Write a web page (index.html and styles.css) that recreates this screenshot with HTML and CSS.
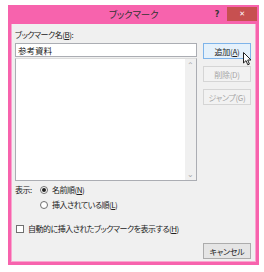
FILE: index.html
```html
<!DOCTYPE html>
<html lang="ja">
<head>
  <meta charset="UTF-8">
  <title>ブックマーク</title>
  <link rel="stylesheet" href="styles.css">
</head>
<body>
  <div class="window">
    <div class="titlebar">
      <span></span>
      <span class="title">ブックマーク</span>
      <div class="controls">
        <span class="help">?</span>
        <span class="close">✕</span>
      </div>
    </div>
    <div class="client">
      <div class="label">ブックマーク名(<u>B</u>):</div>
      <div class="main">
        <div class="combo">
          <div class="combo-input">参考資料</div>
          <div class="combo-list">
            <div class="list-body"></div>
            <div class="scrollbar">
              <span class="arrow">⌃</span>
              <span class="arrow">⌄</span>
            </div>
          </div>
        </div>
        <div class="buttons">
          <button class="btn btn-default">追加(<u>A</u>)</button>
          <button class="btn" disabled>削除(D)</button>
          <button class="btn" disabled>ジャンプ(G)</button>
          <svg class="cursor" width="9" height="14" viewBox="0 0 9 14">
            <path d="M0.5 0.5 L0.5 11 L3 8.6 L4.8 12.8 L6.4 12.1 L4.7 8 L8 8 Z" fill="#fff" stroke="#222" stroke-width="1"/>
          </svg>
        </div>
      </div>
      <div class="sort">
        <span class="sort-label">表示:</span>
        <div class="radios">
          <div class="radio-row"><span class="radio checked"></span>名前順(<u>N</u>)</div>
          <div class="radio-row"><span class="radio"></span>挿入されている順(<u>L</u>)</div>
        </div>
      </div>
      <div class="check-row"><span class="checkbox"></span>自動的に挿入されたブックマークを表示する(<u>H</u>)</div>
      <div class="footer">
        <button class="btn btn-cancel">キャンセル</button>
      </div>
    </div>
  </div>
</body>
</html>
```

FILE: styles.css
```css
body {
  margin: 0;
  background: #ffffff;
  font-family: "Noto Sans CJK JP", sans-serif;
  font-feature-settings: "palt";
  font-size: 8px;
  letter-spacing: -0.5px;
  color: #222222;
}

.window {
  margin: 5px 0 0 8px;
  width: 251px;
  height: 260px;
  box-sizing: border-box;
  background: #f763ad;
  padding: 0 3px 3px 3px;
  display: flex;
  flex-direction: column;
}

.titlebar {
  height: 19px;
  display: grid;
  grid-template-columns: 1fr auto 1fr;
  align-items: center;
}

.title {
  font-size: 9.5px;
  letter-spacing: -0.2px;
  color: #333333;
  line-height: 19px;
}

.controls {
  justify-self: end;
  display: flex;
  align-items: flex-start;
  height: 19px;
  margin-right: -1px;
}

.help {
  font-family: "DejaVu Sans", sans-serif;
  font-weight: bold;
  font-size: 8px;
  color: #333333;
  line-height: 19px;
  margin-right: 8px;
}

.close {
  margin-top: 2px;
  width: 30px;
  height: 14px;
  background: #c75050;
  color: #ffffff;
  font-family: "DejaVu Sans", sans-serif;
  font-weight: bold;
  font-size: 7px;
  line-height: 14px;
  text-align: center;
}

.client {
  flex: 1;
  background: #f0f0f0;
  border: 1px solid #f9a6cf;
  border-top: 0;
  padding: 5px 4px 0 3px;
  display: flex;
  flex-direction: column;
}

u {
  text-decoration: underline;
  text-underline-offset: 1px;
}

.label {
  height: 12px;
  line-height: 12px;
  margin-bottom: 2px;
}

.main {
  display: flex;
  gap: 6px;
}

.combo {
  width: 182px;
}

.combo-input {
  height: 14px;
  box-sizing: border-box;
  border: 1px solid #abadb3;
  background: #ffffff;
  padding-left: 2px;
  line-height: 12px;
  font-size: 8.5px;
  letter-spacing: 0;
}

.combo-list {
  height: 123px;
  box-sizing: border-box;
  border: 1px solid #abadb3;
  margin-top: 1px;
  border-top: 1px solid #dcdcdc;
  background: #ffffff;
  display: flex;
}

.list-body {
  flex: 1;
}

.scrollbar {
  width: 11px;
  background: #f0f0f0;
  display: flex;
  flex-direction: column;
  justify-content: space-between;
  align-items: center;
  color: #a8a8a8;
  font-size: 8px;
  line-height: 12px;
}

.buttons {
  position: relative;
  display: flex;
  flex-direction: column;
  gap: 7px;
}

.btn {
  width: 48px;
  height: 16px;
  padding: 0;
  font-family: inherit;
  font-feature-settings: "palt";
  font-size: 8px;
  letter-spacing: -0.3px;
  color: #222222;
  background: #e5e5e5;
  border: 1px solid #acacac;
}

.btn-default {
  background: #e5f1fb;
  border-color: #7eb4ea;
}

.btn:disabled {
  background: #f2f2f2;
  border-color: #d5d5d5;
  color: #a6a6a6;
}

.cursor {
  position: absolute;
  left: 40px;
  top: 9px;
}

.sort {
  display: flex;
  margin-top: 2px;
}

.sort-label {
  width: 25px;
  line-height: 13px;
}

.radio-row {
  display: flex;
  align-items: center;
  height: 13px;
  margin-bottom: 2px;
}

.radio {
  width: 8px;
  height: 8px;
  box-sizing: border-box;
  border: 1px solid #707070;
  border-radius: 50%;
  background: #ffffff;
  margin-right: 4px;
  display: flex;
  align-items: center;
  justify-content: center;
}

.radio.checked::after {
  content: "";
  width: 4px;
  height: 4px;
  border-radius: 50%;
  background: #222222;
}

.check-row {
  display: flex;
  align-items: center;
  height: 13px;
  margin-top: 9px;
  margin-left: 1px;
}

.checkbox {
  width: 8px;
  height: 8px;
  box-sizing: border-box;
  border: 1px solid #707070;
  background: #ffffff;
  margin-right: 4px;
}

.footer {
  display: flex;
  justify-content: flex-end;
  margin-top: 8px;
}
```
